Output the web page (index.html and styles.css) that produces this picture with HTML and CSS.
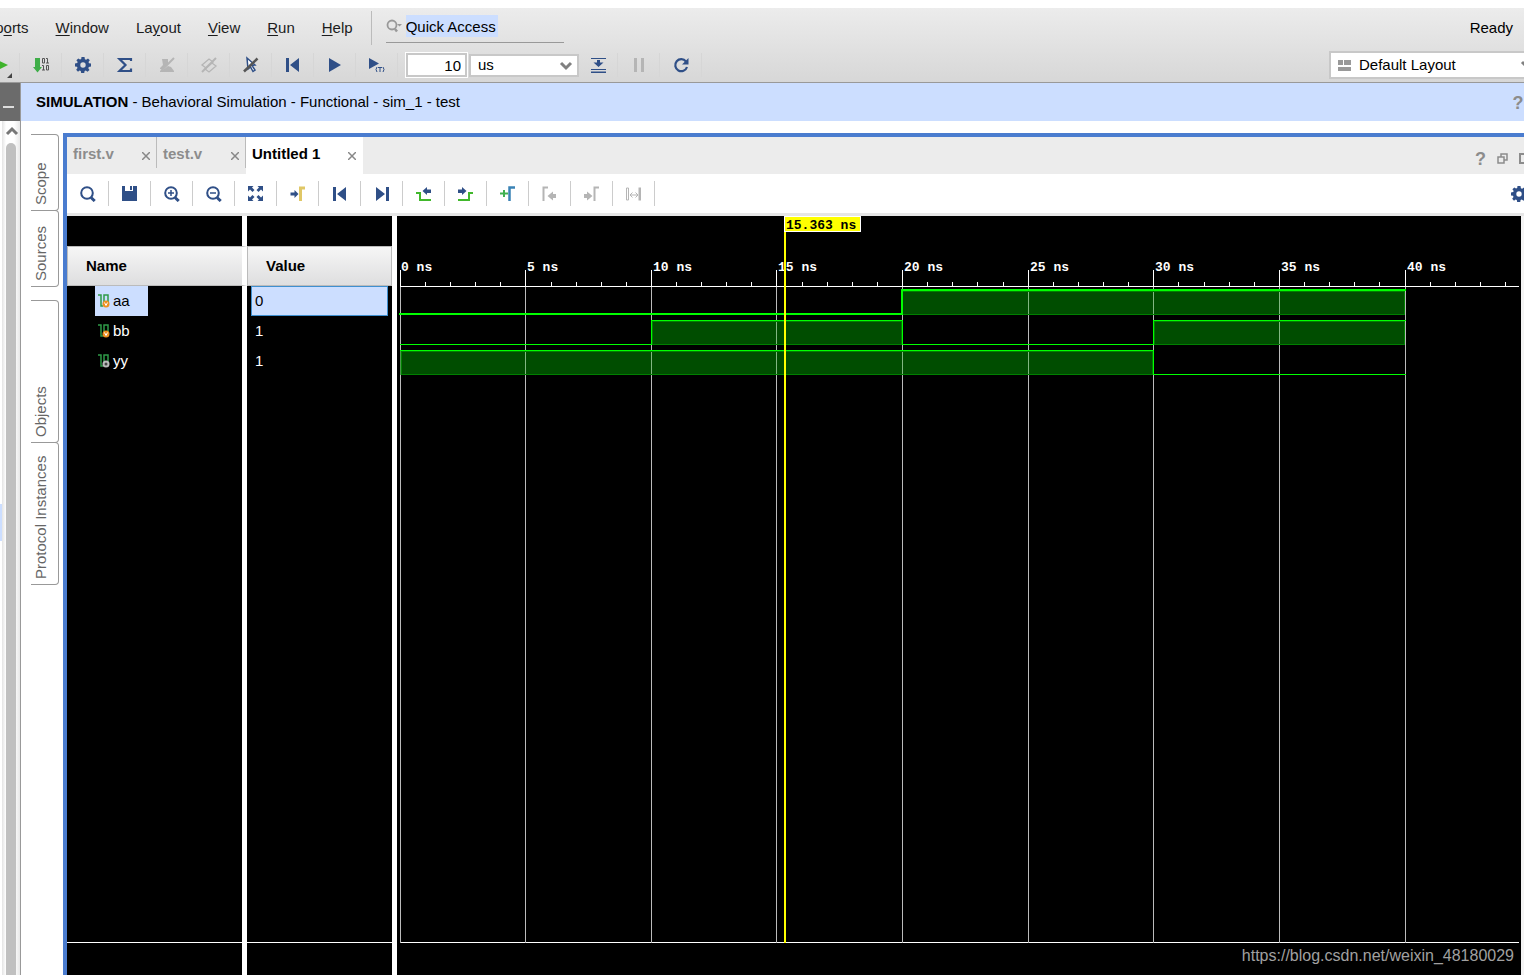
FILE: index.html
```html
<!DOCTYPE html>
<html lang="en">
<head>
<meta charset="utf-8">
<title>Simulation</title>
<link rel="stylesheet" href="styles.css">
</head>
<body>
<svg class="sprite" aria-hidden="true">
  <symbol id="gear" viewBox="0 0 16 16"><path fill="currentColor" fill-rule="evenodd" d="M6.500 0h3l.4 2.200 1.200.5L13 1.500 14.800 3.300l-1.300 1.800.5 1.200 2 .3v3l-2.200.4-.5 1.200 1.200 1.800-2 1.800-1.700-1.200-1.200.5-.4 2h-3l-.4-2.200-1.200-.5L3 14.700 1.200 12.700l1.300-1.700-.5-1.200-2-.3v-3l2.200-.4.5-1.200L1.400 3.200 3.300 1.400 5 2.600l1.200-.5zM8 5.300a2.700 2.700 0 1 0 0 5.400 2.700 2.700 0 0 0 0-5.400z"/></symbol>
  <symbol id="first" viewBox="0 0 16 16"><path fill="currentColor" d="M1 1h3v14H1zM14 1v14L5 8z"/></symbol>
  <symbol id="last" viewBox="0 0 16 16"><path fill="currentColor" d="M12 1h3v14h-3zM2 1v14l9-7z"/></symbol>
  <symbol id="search" viewBox="0 0 16 16"><circle cx="7" cy="7" r="5.800" fill="none" stroke="currentColor" stroke-width="2"/><path d="M11 11.500l3.700 3.500" stroke="currentColor" stroke-width="3"/></symbol>
  <symbol id="close" viewBox="0 0 8 8"><path d="M0 0l8 8M8 0L0 8" stroke="currentColor" stroke-width="1.500"/></symbol>
  <symbol id="chevron" viewBox="0 0 14 10"><path d="M2 2l5 5 5-5" fill="none" stroke="currentColor" stroke-width="3"/></symbol>
  <symbol id="wire" viewBox="0 0 12 14"><path d="M0 1h3v11h2M6 12V1h4v8" fill="none" stroke="#2f9a48" stroke-width="1.500"/></symbol>
  <symbol id="arrow" viewBox="0 0 8 8"><path fill="currentColor" d="M0 2.500h4V0l4 4-4 4V5.500H0z"/></symbol>
</svg>

<header class="header">
  <div class="menubar">
    <nav class="menu">
      <button class="menu-item menu-cut">Rep<u>o</u>rts</button>
      <button class="menu-item"><u>W</u>indow</button>
      <button class="menu-item">La<u>y</u>out</button>
      <button class="menu-item"><u>V</u>iew</button>
      <button class="menu-item"><u>R</u>un</button>
      <button class="menu-item"><u>H</u>elp</button>
    </nav>
    <div class="quick">
      <svg class="quick-icon" viewBox="0 0 16 14"><circle cx="6" cy="6" r="4.500" fill="none" stroke="#999" stroke-width="1.800"/><path d="M9 10l2 2.500" stroke="#999" stroke-width="2.500"/><path d="M11 5h5l-2.500 2.500z" fill="#999"/></svg>
      <input class="quick-input" type="text" value="Quick Access" aria-label="Quick Access">
    </div>
    <span class="status">Ready</span>
  </div>
  <div class="toolbar">
    <button class="tool" aria-label="Run synthesis"><svg class="icon green" viewBox="0 0 16 16"><path fill="currentColor" d="M4 2l13 6-13 6.500z"/></svg><svg class="corner" viewBox="0 0 5 5"><path d="M5 0v5H0z" fill="#444"/></svg></button>
    <button class="tool" aria-label="Generate bitstream"><svg class="icon" viewBox="0 0 16 16"><path fill="#3fae49" d="M2 1h5v9h2L4.500 15.500 0 10h2z"/><g fill="none" stroke="#555"><path d="M9.500 1.500h2v4.500h-2zM13 1.500h1.500V6m-1.500 0h3M9 8.500h1.500V13m-1.500 0h3M13.500 8.500h2V13h-2z"/></g></svg></button>
    <button class="tool" aria-label="Settings"><svg class="icon"><use href="#gear"/></svg></button>
    <button class="tool" aria-label="Reports summary"><svg class="icon" viewBox="0 0 16 16"><path fill="none" stroke="currentColor" stroke-width="2.200" d="M14 4V2H2.500L8.500 8l-6 6H14v-2.500"/></svg></button>
    <button class="tool off" aria-label="Schematic" disabled><svg class="icon" viewBox="0 0 16 16"><path fill="currentColor" d="M3 2h6v5l-5 5H1v-1l3-3zM1 14l3-1 5-4 3 1 3 4v1H1z"/><path d="M2 14L15 1" stroke="currentColor" stroke-width="2"/></svg></button>
    <button class="tool off" aria-label="Layers" disabled><svg class="icon" viewBox="0 0 16 16"><path fill="none" stroke="currentColor" stroke-width="1.300" d="M1 8l7-6 4 3-7 6zM4 12l7-6 4 3-7 6z"/><path d="M1 15L15 1" stroke="currentColor" stroke-width="2"/></svg></button>
    <button class="tool" aria-label="Clear selection"><svg class="icon" viewBox="0 0 16 16"><path fill="#fff" stroke="currentColor" stroke-width="1.500" d="M4 1l8 7-3 .5 3 4.500-2 1.500L7.500 10 5 12z"/><path d="M1 14.500L14.500 1.500" stroke="#555" stroke-width="2.500"/></svg></button>
    <button class="tool" aria-label="Restart"><svg class="icon"><use href="#first"/></svg></button>
    <button class="tool" aria-label="Run all"><svg class="icon" viewBox="0 0 16 16"><path fill="currentColor" d="M2 1l12 7-12 7z"/></svg></button>
    <button class="tool" aria-label="Run for time"><svg class="icon" viewBox="0 0 16 16"><path fill="currentColor" d="M0 1l10 5.500L0 12z"/><path fill="none" stroke="currentColor" d="M8 10q-2 2.500 0 5M9 10.500h4M11 10.500V15M14 10q2 2.500 0 5"/></svg></button>
    <input class="time-input" type="text" value="10" aria-label="Run time">
    <div class="unit">
      <select class="select" aria-label="Time unit"><option>us</option></select>
      <svg class="unit-chevron"><use href="#chevron"/></svg>
    </div>
    <button class="tool tool-narrow" aria-label="Step"><svg class="icon" viewBox="0 0 16 16"><path fill="currentColor" d="M1 1h15v1H1zM1 12h15v1H1zM1 14.500h15v1.500H1zM7 3h3v2.500h3.500L8.500 10l-5-4.500H7z"/></svg></button>
    <button class="tool off" aria-label="Pause" disabled><svg class="icon" viewBox="0 0 16 16"><path fill="currentColor" d="M3 1h3v14H3zM10 1h3v14h-3z"/></svg></button>
    <button class="tool" aria-label="Relaunch"><svg class="icon" viewBox="0 0 16 16"><path d="M13 4.500A6 6 0 1 0 14 10" fill="none" stroke="currentColor" stroke-width="2.200"/><path fill="currentColor" d="M15.500 1v6.500H9z"/></svg></button>
    <div class="layout">
      <svg class="layout-icon" viewBox="0 0 13 11"><path fill="#999" d="M0 0h5v5H0zM6 0h7v5H6zM0 7h13v4H0z"/></svg>
      <select class="select layout-select" aria-label="Layout"><option>Default Layout</option></select>
      <svg class="layout-chevron"><use href="#chevron"/></svg>
    </div>
  </div>
</header>

<div class="body">
  <aside class="rail">
    <button class="rail-head" aria-label="Minimize"><span class="dash"></span></button>
    <div class="rail-scroll">
      <span class="rail-mark"></span>
      <div class="scrollbar">
        <svg class="scroll-up" viewBox="0 0 14 10"><path d="M2 8l5-5 5 5" fill="none" stroke="#777" stroke-width="3"/></svg>
        <div class="thumb"></div>
      </div>
    </div>
  </aside>
  <main class="main">
    <div class="band">
      <p class="band-title"><b>SIMULATION</b> - Behavioral Simulation - Functional - sim_1 - test</p>
      <button class="help" aria-label="Help">?</button>
    </div>
    <div class="work">
      <div class="side-tabs">
        <button class="side-tab">Scope</button>
        <button class="side-tab">Sources</button>
        <button class="side-tab side-tab-long side-gap">Objects</button>
        <button class="side-tab side-tab-long">Protocol Instances</button>
      </div>
      <section class="frame">
        <div class="tabs">
          <div class="tab"><span>first.v</span><button class="x" aria-label="Close first.v"><svg><use href="#close"/></svg></button></div>
          <div class="tab"><span>test.v</span><button class="x" aria-label="Close test.v"><svg><use href="#close"/></svg></button></div>
          <div class="tab tab-active"><span>Untitled 1</span><button class="x" aria-label="Close Untitled 1"><svg><use href="#close"/></svg></button></div>
          <div class="frame-actions">
            <button class="help" aria-label="Window help">?</button>
            <button class="act" aria-label="Float"><svg viewBox="0 0 11 11"><path fill="none" stroke="#8c8c8c" stroke-width="1.500" d="M4 4V1h6v6H7M1 4h6v6H1z"/></svg></button>
            <button class="act" aria-label="Maximize"><svg viewBox="0 0 11 11"><path fill="none" stroke="#8c8c8c" stroke-width="2" d="M1 1h9v9H1z"/></svg></button>
          </div>
        </div>
        <div class="wave-tools">
          <button class="wtool" aria-label="Find"><svg class="icon"><use href="#search"/></svg></button>
          <button class="wtool" aria-label="Save"><svg class="icon" viewBox="0 0 16 16"><path fill="currentColor" d="M0 0h3v5h8V0h4v15H0zM8 0h2v4H8z"/></svg></button>
          <button class="wtool" aria-label="Zoom in"><svg class="icon"><use href="#search"/><path d="M4 7h6M7 4v6" stroke="currentColor" stroke-width="1.500"/></svg></button>
          <button class="wtool" aria-label="Zoom out"><svg class="icon"><use href="#search"/><path d="M4 7h6" stroke="currentColor" stroke-width="1.500"/></svg></button>
          <button class="wtool" aria-label="Zoom fit"><svg class="icon" viewBox="0 0 16 16"><path fill="currentColor" d="M0 0h5.500L4 1.500 6.500 4l-2 2L2 3.500.0 5.500zM15 0H9.500L11 1.500 8.500 4l2 2L13 3.500l2 2zM0 15h5.500L4 13.500 6.500 11l-2-2L2 11.500l-2-2zM15 15H9.500l1.500-1.500L8.500 11l2-2 2.500 2.500 2-2z"/></svg></button>
          <button class="wtool" aria-label="Go to cursor"><svg class="icon" viewBox="0 0 16 16"><use href="#arrow" x="0" y="4" width="9" height="8"/><path d="M10.500 15V2H15" fill="none" stroke="#e0c766" stroke-width="3"/></svg></button>
          <button class="wtool" aria-label="Go to start"><svg class="icon"><use href="#first"/></svg></button>
          <button class="wtool" aria-label="Go to end"><svg class="icon"><use href="#last"/></svg></button>
          <button class="wtool" aria-label="Previous transition"><svg class="icon" viewBox="0 0 16 16"><path fill="currentColor" d="M15 3.500h-4V1L6.500 5l4.500 4V7h4z"/><path d="M0 7h4v7h11" fill="none" stroke="#41b82c" stroke-width="2"/></svg></button>
          <button class="wtool" aria-label="Next transition"><svg class="icon" viewBox="0 0 16 16"><path fill="currentColor" d="M0 3.500h4V1l4.500 4L4 9V7H0z"/><path d="M0 14h11V7h4" fill="none" stroke="#41b82c" stroke-width="2"/></svg></button>
          <button class="wtool" aria-label="Add marker"><svg class="icon" viewBox="0 0 16 16"><path d="M0 7.500h8M4 4v7" stroke="#41b050" stroke-width="2"/><path d="M9.500 15V1.500H15" fill="none" stroke="#3a82b5" stroke-width="2.500"/></svg></button>
          <button class="wtool off" aria-label="Previous marker" disabled><svg class="icon" viewBox="0 0 16 16"><path d="M1.500 15V1.500H6" fill="none" stroke="currentColor" stroke-width="2"/><path fill="currentColor" d="M14 8h-3V5.500L5.500 10l5.500 4.500V12h3z"/></svg></button>
          <button class="wtool off" aria-label="Next marker" disabled><svg class="icon" viewBox="0 0 16 16"><path d="M10.500 15V1.500H15" fill="none" stroke="currentColor" stroke-width="2"/><path fill="currentColor" d="M0 8h3V5.500L8.500 10 3 14.500V12H0z"/></svg></button>
          <button class="wtool off" aria-label="Swap cursors" disabled><svg class="icon" viewBox="0 0 16 16"><path d="M.5 2v12h2V2zM4 9h8M6.500 6.500L4 9l2.500 2.500M9.500 6.500L12 9l-2.500 2.500" fill="none" stroke="currentColor"/><path fill="currentColor" d="M12.500 1.500H15v13h-2.500z"/></svg></button>
          <button class="wtool wtool-end" aria-label="Wave settings"><svg class="icon"><use href="#gear"/></svg></button>
        </div>
        <div class="wave">
          <div class="signals">
            <div class="signals-inner">
              <table class="table">
                <thead><tr><th>Name</th><th>Value</th></tr></thead>
                <tbody>
                  <tr class="selected"><td><span class="sig"><svg viewBox="0 0 12 14"><use href="#wire"/><circle cx="8" cy="10" r="3.500" fill="#ee9020"/><path d="M6.500 8.500L8 11.500l1.500-3" fill="none" stroke="#fff"/></svg>aa</span></td><td><span class="val">0</span></td></tr>
                  <tr><td><span class="sig"><svg viewBox="0 0 12 14"><use href="#wire"/><circle cx="8" cy="10" r="3.500" fill="#ee9020"/><path d="M6.500 8.500L8 11.500l1.500-3" fill="none" stroke="#fff"/></svg>bb</span></td><td><span class="val">1</span></td></tr>
                  <tr><td><span class="sig"><svg viewBox="0 0 12 14"><use href="#wire"/><circle cx="8" cy="10" r="3.500" fill="#bbb"/><circle cx="8" cy="10" r="1.500" fill="#444"/></svg>yy</span></td><td><span class="val">1</span></td></tr>
                </tbody>
              </table>
            </div>
          </div>
          <div class="plot">
            <svg class="canvas" role="img" aria-label="Waveform">
              <g transform="translate(3 0)">
                <g fill="#bbb">
                  <rect x="0" y="54" width="1" height="100%"/><rect x="125" y="54" width="1" height="100%"/><rect x="251" y="54" width="1" height="100%"/><rect x="376" y="54" width="1" height="100%"/><rect x="502" y="54" width="1" height="100%"/><rect x="628" y="54" width="1" height="100%"/><rect x="753" y="54" width="1" height="100%"/><rect x="879" y="54" width="1" height="100%"/><rect x="1005" y="54" width="1" height="100%"/>
                </g>
                <path fill="#fff" d="M0 54h1v16h-1zM125 54h1v16h-1zM251 54h1v16h-1zM376 54h1v16h-1zM502 54h1v16h-1zM628 54h1v16h-1zM753 54h1v16h-1zM879 54h1v16h-1zM1005 54h1v16h-1z"/>
                <path fill="#fff" d="M25 66h1v4h-1zM50 66h1v4h-1zM75 66h1v4h-1zM100 66h1v4h-1zM151 66h1v4h-1zM176 66h1v4h-1zM201 66h1v4h-1zM226 66h1v4h-1zM276 66h1v4h-1zM301 66h1v4h-1zM326 66h1v4h-1zM351 66h1v4h-1zM402 66h1v4h-1zM427 66h1v4h-1zM452 66h1v4h-1zM477 66h1v4h-1zM527 66h1v4h-1zM552 66h1v4h-1zM577 66h1v4h-1zM603 66h1v4h-1zM653 66h1v4h-1zM678 66h1v4h-1zM703 66h1v4h-1zM728 66h1v4h-1zM778 66h1v4h-1zM804 66h1v4h-1zM829 66h1v4h-1zM854 66h1v4h-1zM904 66h1v4h-1zM929 66h1v4h-1zM954 66h1v4h-1zM979 66h1v4h-1zM1030 66h1v4h-1zM1055 66h1v4h-1zM1080 66h1v4h-1zM1105 66h1v4h-1z"/>
                <rect x="0" y="70" width="100%" height="1" fill="#fff"/>
                <g class="ticks">
                  <text x="1" y="55">0 ns</text><text x="127" y="55">5 ns</text><text x="253" y="55">10 ns</text><text x="378" y="55">15 ns</text><text x="504" y="55">20 ns</text><text x="630" y="55">25 ns</text><text x="755" y="55">30 ns</text><text x="881" y="55">35 ns</text><text x="1007" y="55">40 ns</text>
                </g>
                <g fill="#008000" fill-opacity=".6">
                  <rect x="502" y="75" width="503" height="24"/><rect x="251" y="105" width="251" height="24"/><rect x="753" y="105" width="252" height="24"/><rect x="0" y="135" width="753" height="24"/>
                </g>
                <path fill="#fff" fill-opacity=".3" d="M628 76h1v22h-1zM753 76h1v22h-1zM879 76h1v22h-1zM376 106h1v22h-1zM879 106h1v22h-1zM125 136h1v22h-1zM251 136h1v22h-1zM376 136h1v22h-1zM502 136h1v22h-1zM628 136h1v22h-1z"/>
                <path fill="#008000" d="M503 75h502v24H503v-1h501V76H503zM252 105h250v24H252v-1h249v-22H253v22h-1zM754 105h251v24H754v-1h250v-22H755v22h-1zM1 135h752v24H1v-1h751v-22H2v22H1z"/>
                <path fill="#00ff00" d="M-1 97h502V73h505v2H503v24H-1zM0 128h251v-24h252v24h250v-24h253v1H754v24H502v-24H252v24H0zM0 134h754v24h252v1H753v-24H0z"/>
                <rect x="384" y="0" width="2" height="100%" fill="#ff0"/>
                <path fill="#fff" d="M384 0h77v16h-77z"/><path fill="#ff0" d="M385 1h75v14h-75z"/>
                <text class="marker" x="386" y="13">15.363 ns</text>
              </g>
            </svg>
            <span class="watermark">https://blog.csdn.net/weixin_48180029</span>
          </div>
        </div>
      </section>
    </div>
  </main>
</div>
</body>
</html>
```

FILE: styles.css
```css
* { box-sizing: border-box; }
body {
  margin: 0;
  padding-top: 8px;
  height: 100vh;
  display: flex;
  flex-direction: column;
  overflow: hidden;
  background: #fff;
  color: #000;
  font: 15px/18px "Liberation Sans", Arial, sans-serif;
}
button, input, select { font: inherit; color: inherit; border: 0; background: none; padding: 0; margin: 0; border-radius: 0; }
svg { display: block; }
.sprite { position: absolute; width: 0; height: 0; }
.icon { width: 16px; height: 16px; overflow: visible; }
.green { color: #3eb32b; }

.header { background: linear-gradient(#ececec, #d7d7d7); border-bottom: 1px solid #999; overflow: hidden; }
.menubar { display: flex; align-items: center; height: 40px; padding-right: 11px; }
.menu { display: flex; align-items: center; gap: 27px; height: 34px; padding-right: 18px; border-right: 1px solid #bbb; color: #1c1c1c; }
.menu-cut { margin-left: -24px; }
.menu-item u { text-underline-offset: 2px; }
.quick { display: flex; align-items: center; gap: 4px; width: 178px; height: 32px; margin: 0 0 5px 14px; border-bottom: 1px solid #999; padding-bottom: 1px; align-self: flex-end; }
.quick-icon { width: 16px; height: 14px; }
.quick-input { width: 92px; height: 22px; background: #ccdeff; }
.status { margin-left: auto; }

.toolbar { display: flex; align-items: center; height: 34px; margin-left: -22px; }
.tool { position: relative; display: flex; align-items: center; justify-content: center; width: 42px; height: 24px; color: #2f4f87; border-right: 1px solid #d6d6d6; flex: none; }
.tool-narrow { width: 39px; }
.off { color: #b5b5b5; }
.corner { position: absolute; right: 7px; bottom: -1px; width: 5px; height: 5px; }
.time-input { width: 61px; height: 24px; margin-left: 8px; padding-right: 4px; text-align: right; background: #fff; border: 2px solid #c8c8c8; outline: 1px solid #fff; }
.unit { position: relative; width: 110px; margin-left: 2px; }
.select { appearance: none; width: 100%; height: 23px; padding-left: 7px; background: #fff; border: 2px solid #c8c8c8; display: block; }
.unit-chevron { position: absolute; right: 6px; top: 7px; width: 14px; height: 10px; color: #808080; pointer-events: none; }
.layout { position: relative; width: 207px; margin-left: auto; margin-right: -12px; flex: none; }
.layout-select { height: 28px; padding-left: 28px; }
.layout-icon { position: absolute; left: 9px; top: 9px; width: 13px; height: 11px; }
.layout-chevron { position: absolute; right: 2px; top: 9px; width: 14px; height: 10px; color: #808080; pointer-events: none; }

.body { flex: 1; display: flex; min-height: 0; }
.rail { width: 21px; flex: none; display: flex; flex-direction: column; border-right: 1px solid #999; }
.rail-head { height: 38px; background: #6b6b6b; display: flex; align-items: center; padding: 10px 0 0 3px; }
.dash { width: 11px; height: 2px; background: #ddd; }
.rail-scroll { flex: 1; display: flex; position: relative; }
.rail-mark { position: absolute; left: 0; top: 383px; width: 2px; height: 37px; background: #ccdeff; }
.scrollbar { flex: 1; display: flex; flex-direction: column; align-items: center; margin-left: 2px; background: linear-gradient(to right, #e4e4e4, #fff 4px, #fff 12px, #e8e8e8); }
.scroll-up { width: 14px; height: 10px; margin: 5px 0 7px 2px; }
.thumb { width: 10px; flex: 1; border-radius: 5px 5px 0 0; background: #c0c0c0; }

.main { flex: 1; min-width: 0; display: flex; flex-direction: column; overflow: hidden; }
.band { display: flex; align-items: center; height: 38px; padding-left: 15px; background: #ccdeff; flex: none; }
.band-title { margin: 0; }
.help { color: #8c8c8c; font-size: 18px; font-weight: bold; }
.band .help { margin: 2px 0 0 auto; width: 12px; }
.work { flex: 1; display: flex; min-height: 0; padding-top: 12px; }
.side-tabs { width: 28px; margin: 1px 4px 0 10px; flex: none; }
.side-tab { display: flex; align-items: center; writing-mode: vertical-rl; transform: rotate(180deg); width: 28px; height: 77px; margin-bottom: -1px; padding: 5px 0 5px 7px; border: 1px solid #999; border-right: 0; border-radius: 4px 0 0 4px; color: #666; }
.side-tab-long { height: 143px; }
.side-gap { margin-top: 14px; }

.frame { flex: 1; min-width: 0; display: flex; flex-direction: column; border: solid #4a7ccf; border-width: 4px 0 0 4px; }
.tabs { display: flex; height: 37px; background: #ececec; font-weight: bold; color: #8c8c8c; flex: none; }
.tab { display: flex; justify-content: space-between; width: 90px; height: 31px; padding: 8px 6px 0 6px; border-right: 1px solid #bbb; }
.tab + .tab { width: 89px; }
.tab + .tab-active { width: 117px; height: 37px; padding-right: 7px; background: #fff; color: #000; border: 0; }
.x { height: 9px; margin-top: 6px; color: #888; }
.x svg { width: 8px; height: 8px; }
.frame-actions { display: flex; align-items: center; gap: 11px; margin: 6px -6px 0 auto; }
.act svg { width: 11px; height: 11px; }
.wave-tools { display: flex; align-items: center; height: 42px; border-bottom: 3px solid #e6e6e6; flex: none; }
.wtool { width: 42px; height: 25px; display: flex; align-items: center; justify-content: center; color: #2f4f87; border-right: 1px solid #ccc; flex: none; }
.wtool.off { color: #b5b5b5; }
.wtool-end { width: 16px; margin: 0 -3px 0 auto; border: 0; }

.wave { flex: 1; display: flex; min-height: 0; padding-right: 3px; background: #f4f4f4; }
.signals { width: 330px; flex: none; padding-bottom: 32px; border-right: 5px solid #fff; background: linear-gradient(to right, #000 175px, #fff 175px, #fff 180px, #000 180px); }
.signals-inner { height: 100%; padding-top: 30px; border-bottom: 1px solid #fff; }
.table { width: 100%; table-layout: fixed; border-spacing: 0; color: #fff; }
.table th { height: 40px; padding: 0 0 0 18px; text-align: left; color: #000; background: linear-gradient(#f6f6f6, #dededf); border: 1px solid #bbb; }
.table th:first-child { width: 180px; border-right: 5px solid #fff; }
.table td { height: 30px; padding: 0 4px; }
.table td:first-child { padding-left: 28px; }
.sig { display: flex; align-items: center; gap: 3px; width: 53px; height: 30px; padding-left: 3px; }
.sig svg { width: 12px; height: 14px; }
.val { display: flex; align-items: center; height: 30px; padding-left: 3px; border: 1px solid transparent; }
.selected .sig, .selected .val { background: #ccdeff; color: #000; }
.selected .val { border-color: #3f8fcf; }
.plot { position: relative; flex: 1; min-width: 0; padding: 0 2px 32px 0; background: #000; }
.canvas { width: 100%; height: 100%; background: linear-gradient(#fff, #fff) 3px 100% / 100% 1px no-repeat; shape-rendering: crispEdges; }
.ticks text, .marker { font: bold 13px "Liberation Mono", monospace; fill: #fff; }
.marker { fill: #000; }
.watermark { position: absolute; right: 7px; bottom: 10px; color: #a0a0a0; font-size: 16px; }
```
